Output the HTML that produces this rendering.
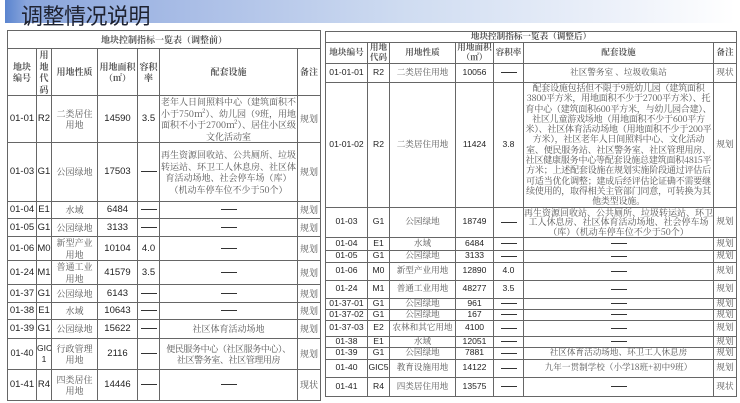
<!DOCTYPE html>
<html><head><meta charset="utf-8"><style>
*{margin:0;padding:0;box-sizing:border-box}
body{width:740px;height:403px;background:#fff;position:relative;overflow:hidden;font-family:"Liberation Sans","Noto Serif CJK SC","Noto Sans CJK SC",sans-serif;color:#333}
.bar{position:absolute;left:5px;top:0;width:730px;height:23px;background:linear-gradient(to right,#5a84cf 0,#8aa6dc 3%,#a9bde6 25%,#cfdcf1 55%,#eef2fa 85%,#fff 100%)}
.title{position:absolute;left:21px;top:-1px;font:22px "Liberation Sans","Noto Sans CJK SC",sans-serif;color:#1e2230;letter-spacing:-0.5px}
table{position:absolute;border-collapse:collapse;table-layout:fixed;font-size:9px}
td{border:1px solid #666;text-align:center;vertical-align:middle;overflow:hidden;line-height:11px;padding:0;white-space:normal}
.L{left:7px;top:30px;width:313px}
.L td{font-size:9px;line-height:11.5px}
.L td.n{font-size:9.5px}
.R{left:325px;top:31px;width:411px}
.R td{font-size:8.6px;line-height:9.6px}
.s{font-family:"Noto Serif CJK SC",serif;color:#555}
.n{font-family:"Liberation Sans",sans-serif;color:#222}
b{font-weight:bold}
.d{display:inline-block;width:16px;border-top:1px solid #333;vertical-align:middle}
.big{font-size:9px!important;line-height:10.3px!important;letter-spacing:-0.2px}
</style></head><body>
<div class="bar"></div><div class="title">调整情况说明</div>

<table class="L">
<colgroup><col style="width:29px"><col style="width:15px"><col style="width:46px"><col style="width:40px"><col style="width:22px"><col style="width:138px"><col style="width:23px"></colgroup>
<tr style="height:18px"><td colspan="7" class="s"><b>地块控制指标一览表（调整前）</b></td></tr>
<tr style="height:47px"><td class="s"><b>地块<br>编号</b></td><td class="s"><b>用<br>地<br>代<br>码</b></td><td class="s"><b>用地性质</b></td><td class="s"><b>用地面积<br>（㎡）</b></td><td class="s"><b>容积<br>率</b></td><td class="s"><b>配套设施</b></td><td class="s"><b>备注</b></td></tr>
<tr style="height:46px"><td class="n">01-01</td><td class="n">R2</td><td class="s">二类居住<br>用地</td><td class="n">14590</td><td class="n">3.5</td><td class="s">老年人日间照料中心（建筑面积不小于750m²）、幼儿园（9班，用地面积不小于2700m²）、居住小区级文化活动室</td><td class="s">规划</td></tr>
<tr style="height:59px"><td class="n">01-03</td><td class="n">G1</td><td class="s">公园绿地</td><td class="n">17503</td><td><span class="d"></span></td><td class="s">再生资源回收站、公共厕所、垃圾转运站、环卫工人休息房、社区体育活动场地、社会停车场（库）（机动车停车位不少于50个）</td><td class="s">规划</td></tr>
<tr style="height:17px"><td class="n">01-04</td><td class="n">E1</td><td class="s">水域</td><td class="n">6484</td><td><span class="d"></span></td><td><span class="d"></span></td><td class="s">规划</td></tr>
<tr style="height:18px"><td class="n">01-05</td><td class="n">G1</td><td class="s">公园绿地</td><td class="n">3133</td><td><span class="d"></span></td><td><span class="d"></span></td><td class="s">规划</td></tr>
<tr style="height:24px"><td class="n">01-06</td><td class="n">M0</td><td class="s">新型产业<br>用地</td><td class="n">10104</td><td class="n">4.0</td><td><span class="d"></span></td><td class="s">规划</td></tr>
<tr style="height:24px"><td class="n">01-24</td><td class="n">M1</td><td class="s">普通工业<br>用地</td><td class="n">41579</td><td class="n">3.5</td><td><span class="d"></span></td><td class="s">规划</td></tr>
<tr style="height:18px"><td class="n">01-37</td><td class="n">G1</td><td class="s">公园绿地</td><td class="n">6143</td><td><span class="d"></span></td><td><span class="d"></span></td><td class="s">规划</td></tr>
<tr style="height:17px"><td class="n">01-38</td><td class="n">E1</td><td class="s">水域</td><td class="n">10643</td><td><span class="d"></span></td><td><span class="d"></span></td><td class="s">规划</td></tr>
<tr style="height:19px"><td class="n">01-39</td><td class="n">G1</td><td class="s">公园绿地</td><td class="n">15622</td><td><span class="d"></span></td><td class="s">社区体育活动场地</td><td class="s">规划</td></tr>
<tr style="height:31px"><td class="n" style="font-size:9px">01-40</td><td class="n" style="font-size:8.5px">GIC<br>1</td><td class="s">行政管理<br>用地</td><td class="n">2116</td><td><span class="d"></span></td><td class="s" style="letter-spacing:-0.4px">便民服务中心（社区服务中心）、<br>社区警务室、社区管理用房</td><td class="s">规划</td></tr>
<tr style="height:31px"><td class="n">01-41</td><td class="n">R4</td><td class="s">四类居住<br>用地</td><td class="n">14446</td><td><span class="d"></span></td><td><span class="d"></span></td><td class="s">现状</td></tr>
</table>

<table class="R">
<colgroup><col style="width:42px"><col style="width:22px"><col style="width:66px"><col style="width:38px"><col style="width:30px"><col style="width:190px"><col style="width:23px"></colgroup>
<tr style="height:11px"><td colspan="7" class="s"><b>地块控制指标一览表（调整后）</b></td></tr>
<tr style="height:21px"><td class="s"><b>地块编号</b></td><td class="s"><b>用地<br>代码</b></td><td class="s"><b>用地性质</b></td><td class="s"><b>用地面积<br>（㎡）</b></td><td class="s"><b>容积率</b></td><td class="s"><b>配套设施</b></td><td class="s"><b>备注</b></td></tr>
<tr style="height:19px"><td class="n">01-01-01</td><td class="n">R2</td><td class="s">二类居住用地</td><td class="n">10056</td><td><span class="d"></span></td><td class="s">社区警务室 、垃圾收集站</td><td class="s">现状</td></tr>
<tr style="height:124px"><td class="n">01-01-02</td><td class="n">R2</td><td class="s">二类居住用地</td><td class="n">11424</td><td class="n">3.8</td><td class="s big">配套设施包括但不限于9班幼儿园（建筑面积3800平方米，用地面积不少于2700平方米）、托育中心（建筑面积600平方米，与幼儿园合建）、社区儿童游戏场地（用地面积不少于600平方米）、社区体育活动场地（用地面积不少于200平方米），社区老年人日间照料中心、文化活动室、便民服务站、社区警务室、社区管理用房、社区健康服务中心等配套设施总建筑面积4815平方米；上述配套设施在规划实施阶段通过评估后可适当优化调整；建成后经评估论证确不需要继续使用的，取得相关主管部门同意，可转换为其他类型设施。</td><td class="s">规划</td></tr>
<tr style="height:30px"><td class="n">01-03</td><td class="n">G1</td><td class="s">公园绿地</td><td class="n">18749</td><td><span class="d"></span></td><td class="s" style="font-size:9px">再生资源回收站、公共厕所、垃圾转运站、环卫工人休息房、社区体育活动场地、社会停车场（库）（机动车停车位不少于50个）</td><td class="s">规划</td></tr>
<tr style="height:13px"><td class="n">01-04</td><td class="n">E1</td><td class="s">水域</td><td class="n">6484</td><td><span class="d"></span></td><td><span class="d"></span></td><td class="s">规划</td></tr>
<tr style="height:12px"><td class="n">01-05</td><td class="n">G1</td><td class="s">公园绿地</td><td class="n">3133</td><td><span class="d"></span></td><td><span class="d"></span></td><td class="s">规划</td></tr>
<tr style="height:18px"><td class="n">01-06</td><td class="n">M0</td><td class="s">新型产业用地</td><td class="n">12890</td><td class="n">4.0</td><td><span class="d"></span></td><td class="s">规划</td></tr>
<tr style="height:18px"><td class="n">01-24</td><td class="n">M1</td><td class="s">普通工业用地</td><td class="n">48277</td><td class="n">3.5</td><td><span class="d"></span></td><td class="s">规划</td></tr>
<tr style="height:11px"><td class="n">01-37-01</td><td class="n">G1</td><td class="s">公园绿地</td><td class="n">961</td><td><span class="d"></span></td><td><span class="d"></span></td><td class="s">规划</td></tr>
<tr style="height:11px"><td class="n">01-37-02</td><td class="n">G1</td><td class="s">公园绿地</td><td class="n">167</td><td><span class="d"></span></td><td><span class="d"></span></td><td class="s">规划</td></tr>
<tr style="height:16px"><td class="n">01-37-03</td><td class="n">E2</td><td class="s">农林和其它用地</td><td class="n">4100</td><td><span class="d"></span></td><td><span class="d"></span></td><td class="s">规划</td></tr>
<tr style="height:11px"><td class="n">01-38</td><td class="n">E1</td><td class="s">水域</td><td class="n">12051</td><td><span class="d"></span></td><td><span class="d"></span></td><td class="s">规划</td></tr>
<tr style="height:12px"><td class="n">01-39</td><td class="n">G1</td><td class="s">公园绿地</td><td class="n">7881</td><td><span class="d"></span></td><td class="s">社区体育活动场地、环卫工人休息房</td><td class="s">规划</td></tr>
<tr style="height:18px"><td class="n">01-40</td><td class="n">GIC5</td><td class="s">教育设施用地</td><td class="n">14122</td><td><span class="d"></span></td><td class="s">九年一贯制学校（小学18班+初中9班）</td><td class="s">规划</td></tr>
<tr style="height:19px"><td class="n">01-41</td><td class="n">R4</td><td class="s">四类居住用地</td><td class="n">13575</td><td><span class="d"></span></td><td><span class="d"></span></td><td class="s">现状</td></tr>
</table>
</body></html>
